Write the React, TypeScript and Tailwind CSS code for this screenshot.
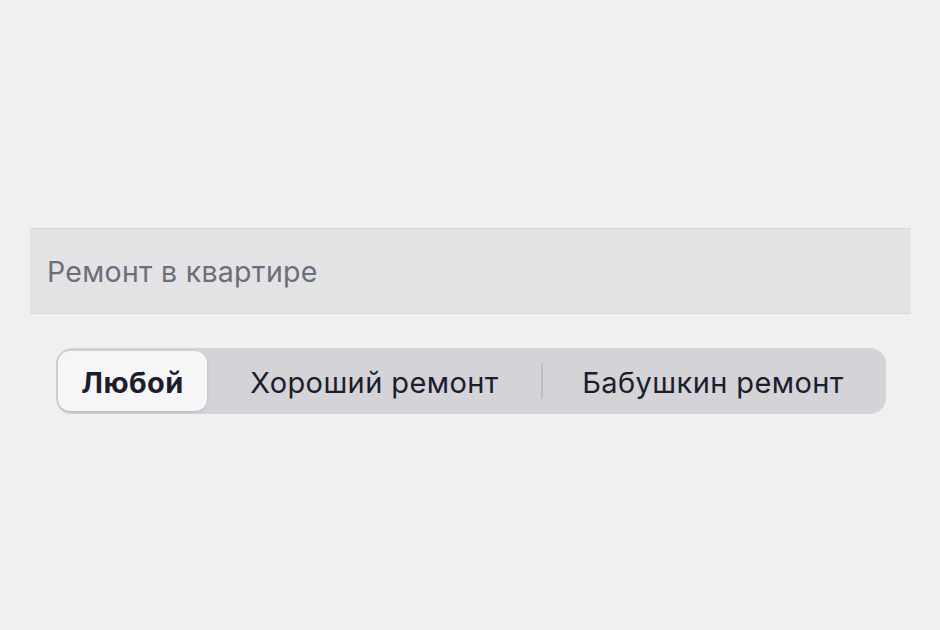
import { useState } from "react";

const options = [
  { label: "Любой", w: "w-[149px]" },
  { label: "Хороший ремонт", w: "w-[335px]" },
  { label: "Бабушкин ремонт", w: "w-[342px]" },
];

export default function App() {
  const [active, setActive] = useState(0);

  return (
    <div className="w-[940px] h-[630px] bg-[#f0f0f0] pt-[228px] font-['Inter',sans-serif]">
      <div className="ml-[30px] w-[881px] h-[86px] bg-[#e3e3e6] border-y border-[#d8d8de] flex items-center pl-[17px] pt-[2px]">
        <span className="text-[28.5px] text-[#6b6e7b] tracking-[0.3px]">Ремонт в квартире</span>
      </div>

      <div className="ml-[56px] mt-[34px] w-[830px] h-[66px] bg-[#d3d3d8] rounded-[16px] flex items-center px-[2px]">
        {options.map((o, i) => (
          <div key={o.label} className="flex items-center">
            {i === 2 && <div className="w-[2px] h-[36px] bg-[#bdbdc3] -ml-[1px] -mr-[1px]" />}
            <button
              onClick={() => setActive(i)}
              className={
                o.w +
                " h-[60px] flex items-center justify-center pt-[3px] rounded-[12px] text-[29px] tracking-[0.4px] text-[#1c1e2e] " +
                (active === i
                  ? "bg-[#f6f6f8] font-bold shadow-[0_1px_3px_rgba(0,0,0,0.15)]"
                  : "")
              }
            >
              {o.label}
            </button>
          </div>
        ))}
      </div>
    </div>
  );
}
